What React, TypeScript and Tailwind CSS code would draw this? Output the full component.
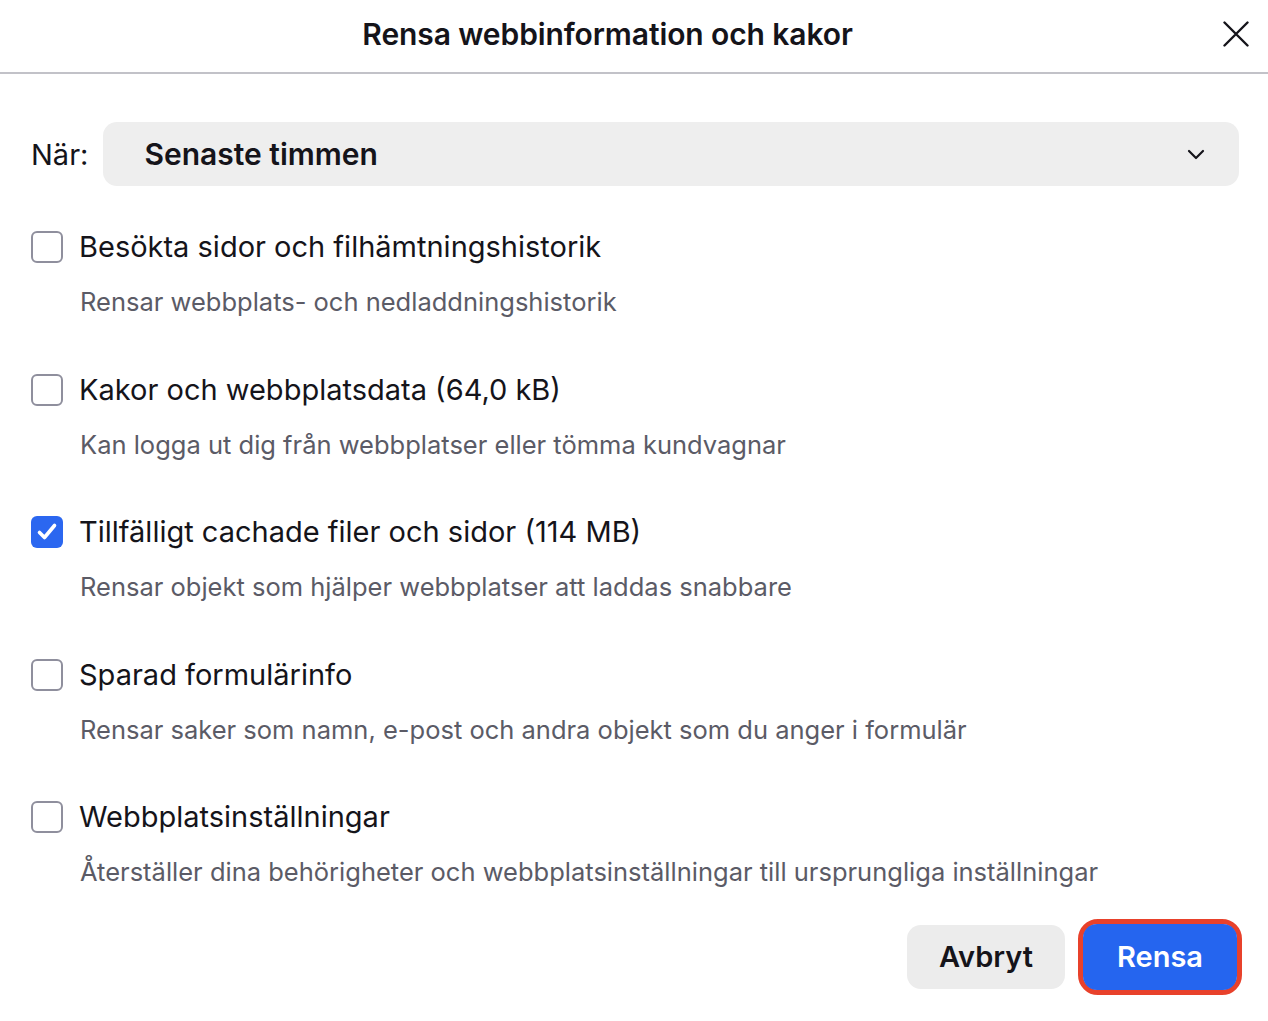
import React from "react";

const items = [
  { label: "Besökta sidor och filhämtningshistorik", desc: "Rensar webbplats- och nedladdningshistorik", checked: false },
  { label: "Kakor och webbplatsdata (64,0 kB)", desc: "Kan logga ut dig från webbplatser eller tömma kundvagnar", checked: false },
  { label: "Tillfälligt cachade filer och sidor (114 MB)", desc: "Rensar objekt som hjälper webbplatser att laddas snabbare", checked: true },
  { label: "Sparad formulärinfo", desc: "Rensar saker som namn, e-post och andra objekt som du anger i formulär", checked: false },
  { label: "Webbplatsinställningar", desc: "Återställer dina behörigheter och webbplatsinställningar till ursprungliga inställningar", checked: false },
];

function Checkbox({ checked }: { checked: boolean }) {
  if (checked) {
    return (
      <div className="w-[32px] h-[32px] rounded-[6px] bg-[#2b67f0] flex items-center justify-center shrink-0">
        <svg width="24" height="24" viewBox="0 0 24 24" fill="none">
          <path d="M4.5 12.5 L9.5 17.5 L19.5 5.5" stroke="white" strokeWidth="3.6" strokeLinecap="round" strokeLinejoin="round" />
        </svg>
      </div>
    );
  }
  return <div className="w-[32px] h-[32px] rounded-[6px] border-2 border-[#8f8f9d] bg-white shrink-0" />;
}

export default function App() {
  return (
    <div className="w-[1268px] h-[1021px] bg-white text-[#15141a] overflow-hidden" style={{ fontFamily: "Inter, 'Noto Sans', sans-serif" }}>
      <div className="relative h-[74px] border-b-2 border-[#c2c2c8] flex items-center justify-center">
        <div className="text-[30px] font-semibold leading-none tracking-[-0.1px] -mt-[4px] ml-[-53px]">Rensa webbinformation och kakor</div>
        <div className="absolute right-[19px] top-[21px]">
          <svg width="26" height="26" viewBox="0 0 26 26" fill="none">
            <path d="M1.5 1.5 L24.5 24.5 M24.5 1.5 L1.5 24.5" stroke="#15141a" strokeWidth="2.4" strokeLinecap="round" />
          </svg>
        </div>
      </div>
      <div className="pl-[31px] pr-[29px]">
        <div className="mt-[48px] flex items-center gap-[15px]">
          <div className="text-[29px] leading-none">När:</div>
          <div className="flex-1 h-[64px] rounded-[14px] bg-[#eeeeee] flex items-center justify-between pl-[41px] pr-[34px]">
            <div className="text-[30px] font-semibold leading-none">Senaste timmen</div>
            <svg width="18" height="12" viewBox="0 0 18 12" fill="none">
              <path d="M2 3 L9 10 L16 3" stroke="#15141a" strokeWidth="2.2" strokeLinecap="round" strokeLinejoin="round" />
            </svg>
          </div>
        </div>
        <div className="mt-[43px] flex flex-col gap-[53.5px]">
          {items.map((it) => (
            <div key={it.label} className="flex flex-col gap-[21px]">
              <div className="flex items-center gap-[16px] h-[36px]">
                <Checkbox checked={it.checked} />
                <div className="text-[29px] leading-[36px]">{it.label}</div>
              </div>
              <div className="pl-[49px] text-[25.5px] leading-[32px] text-[#5b5b66]">{it.desc}</div>
            </div>
          ))}
        </div>
        <div className="mt-[36px] flex justify-end items-center gap-[18px] pr-[2px]">
          <div className="w-[158px] h-[64px] rounded-[14px] bg-[#ececec] flex items-center justify-center text-[29px] font-semibold">Avbryt</div>
          <div className="rounded-[20px] border-[5px] border-[#e8412b] -m-[5px]">
            <div className="w-[154px] h-[66px] rounded-[14px] bg-[#2565ef] flex items-center justify-center text-[29px] font-semibold text-white">Rensa</div>
          </div>
        </div>
      </div>
    </div>
  );
}
